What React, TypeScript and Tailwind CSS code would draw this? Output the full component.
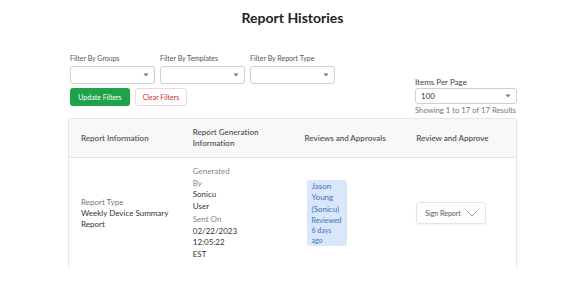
import React from "react";

function Caret() {
  return (
    <svg width="6" height="4" viewBox="0 0 6 4" className="text-[#777]">
      <path d="M0.5 0.5 L3 3.5 L5.5 0.5 Z" fill="currentColor" />
    </svg>
  );
}

function FilterSelect({ label }: { label: string }) {
  return (
    <div className="flex flex-col">
      <span className="text-[7px] leading-[9px] text-[#555] mb-[3px]">{label}</span>
      <div className="w-[85px] h-[18px] border border-[#cfcfcf] rounded-[3px] bg-white flex items-center justify-end pr-[5px]">
        <Caret />
      </div>
    </div>
  );
}

export default function App() {
  const headers = [
    "Report Information",
    "Report Generation Information",
    "Reviews and Approvals",
    "Review and Approve",
  ];

  return (
    <div className="w-[565px] h-[300px] bg-white font-['Lato',sans-serif] overflow-hidden">
      <div className="ml-[68px] w-[449px]">
        <h1 className="text-center text-[14px] font-bold text-[#222] pt-[9px] leading-[18px]">
          Report Histories
        </h1>

        <div className="flex justify-between items-end mt-[27px]">
          <div className="pl-[2px]">
            <div className="flex gap-[5px]">
              <FilterSelect label="Filter By Groups" />
              <FilterSelect label="Filter By Templates" />
              <FilterSelect label="Filter By Report Type" />
            </div>
            <div className="flex gap-[5px] mt-[4px]">
              <button className="w-[60px] h-[18px] rounded-[3px] bg-[#1fa34a] text-white text-[7px]">
                Update Filters
              </button>
              <button className="w-[52px] h-[18px] rounded-[3px] bg-white border border-[#f0d8d8] text-[#c9302c] text-[7px]">
                Clear Filters
              </button>
            </div>
          </div>
          <div className="flex flex-col w-[102px] mb-[-9px]">
            <span className="text-[8px] leading-[10px] text-[#444] mb-[1px]">Items Per Page</span>
            <div className="h-[16px] border border-[#cfcfcf] rounded-[3px] bg-white flex items-center justify-between px-[5px]">
              <span className="text-[8px] text-[#333]">100</span>
              <Caret />
            </div>
            <span className="text-[7.7px] leading-[10px] text-[#777] mt-[1px] whitespace-nowrap">
              Showing 1 to 17 of 17 Results
            </span>
          </div>
        </div>

        <div className="mt-[12px] border-t border-l border-r border-[#e6e6e6] rounded-t-[3px]">
          <div className="grid grid-cols-4 h-[39px] bg-[#f8f8f8] border-b border-[#e6e6e6] items-center">
            {headers.map((h, i) => (
              <div key={h} className="px-[12px] text-[8px] leading-[11px] font-semibold text-[#555]">
                <span className={i === 1 ? "block w-[80px]" : ""}>{h}</span>
              </div>
            ))}
          </div>
          <div className="grid grid-cols-4 items-center h-[110px]">
            <div className="px-[12px] text-[8px] leading-[11px]">
              <div className="text-[#777]">Report Type</div>
              <div className="text-[#333]">Weekly Device Summary Report</div>
            </div>
            <div className="px-[12px] text-[8px] leading-[11.5px]">
              <div className="w-[44px]">
                <div className="text-[#888]">Generated By</div>
                <div className="text-[#333]">Sonicu</div>
                <div className="text-[#333]">User</div>
                <div className="text-[#888] mt-[2px]">Sent On</div>
                <div className="text-[#333]">02/22/2023 12:05:22 EST</div>
              </div>
            </div>
            <div className="pl-[14px]">
              <div className="w-[40px] bg-[#d9e7fb] rounded-[3px] px-[5px] py-[1px] text-[#3d6fb8]">
                <div className="text-[8px] leading-[11.5px]">Jason Young (Sonicu)</div>
                <div className="text-[7px] leading-[10px]">Reviewed 6 days ago</div>
              </div>
            </div>
            <div className="px-[12px]">
              <button className="w-[70px] h-[22px] border border-[#e3e3e3] rounded-[3px] bg-white shadow-[0_1px_2px_rgba(0,0,0,0.05)] flex items-center justify-between pl-[8px] pr-[7px]">
                <span className="text-[7px] text-[#555]">Sign Report</span>
                <svg width="12" height="7" viewBox="0 0 12 7">
                  <path d="M0.5 0.5 L6 6 L11.5 0.5" fill="none" stroke="#999" strokeWidth="0.9" />
                </svg>
              </button>
            </div>
          </div>
        </div>
      </div>
    </div>
  );
}
